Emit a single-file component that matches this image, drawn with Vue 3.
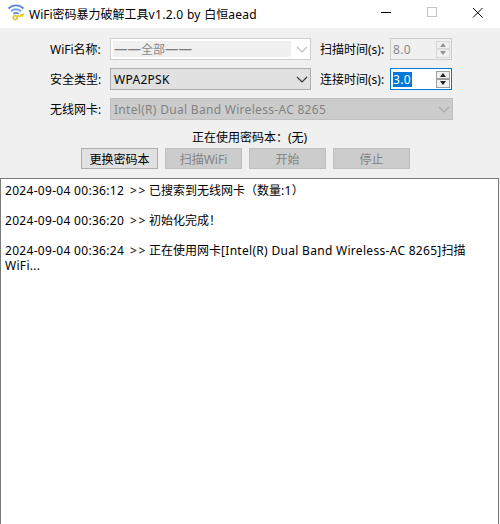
<script setup>
// each line: prefix is the timestamp column, parts are [text, isLatin]
const log = [
  { time: '2024-09-04 00:36:12', parts: [['已搜索到无线网卡（数量', false], [':1', true], ['）', false]] },
  null,
  { time: '2024-09-04 00:36:20', parts: [['初始化完成！', false]] },
  null,
  {
    time: '2024-09-04 00:36:24',
    parts: [
      ['正在使用网卡', false],
      ['[Intel(R) Dual Band Wireless-AC 8265]', true],
      ['扫描', false],
      ['WiFi...', true]
    ]
  }
]
</script>

<template>
  <div class="window">
    <div class="titlebar">
      <svg class="app-icon" width="20" height="20" viewBox="0 0 20 20">
        <path d="M1.5 4.5 A10.5 10.5 0 0 1 16.5 4.5" fill="none" stroke="#5b8ad6" stroke-width="1.9" />
        <path d="M4 7.3 A7 7 0 0 1 14 7.3" fill="none" stroke="#7ba4e6" stroke-width="1.9" />
        <path d="M6.3 10 A3.8 3.8 0 0 1 11.7 10" fill="none" stroke="#5b8ad6" stroke-width="1.7" />
        <circle cx="8.2" cy="13.6" r="2" fill="none" stroke="#e3c52c" stroke-width="1.6" />
        <path d="M10 12.6 L17 10 M15 10.8 L15.8 12.6 M13 11.5 L13.8 13.3" fill="none" stroke="#e3c52c" stroke-width="1.5" />
      </svg>
      <span class="title">WiFi密码暴力破解工具<span class="lat">v1.2.0 by </span>白恒<span class="lat">aead</span></span>
      <div class="win-buttons">
        <svg width="46" height="28" viewBox="0 0 46 28"><path d="M18 12.5 H28" stroke="#000" /></svg>
        <svg width="46" height="28" viewBox="0 0 46 28"><rect x="18.5" y="7.5" width="9" height="9" fill="none" stroke="#c4c4c4" /></svg>
        <svg width="46" height="28" viewBox="0 0 46 28"><path d="M18 8 L27.5 17.5 M27.5 8 L18 17.5" stroke="#000" /></svg>
      </div>
    </div>

    <div class="panel">
      <div class="row">
        <label class="lbl">WiFi名称:</label>
        <div class="combo combo-off short">
          <span class="combo-inner"><span class="dash">——</span>全部<span class="dash">——</span></span>
          <svg class="chev" width="12" height="8" viewBox="0 0 12 8"><path d="M1 1 L6 6 L11 1" fill="none" stroke="#bdbdbd" stroke-width="1.1" /></svg>
        </div>
        <label class="lbl2">扫描时间(s):</label>
        <div class="spin spin-off">
          <span class="spin-val lat">8.0</span>
          <div class="arrows">
            <span class="arrow"><i class="up"></i></span>
            <span class="arrow"><i class="down"></i></span>
          </div>
        </div>
      </div>

      <div class="row">
        <label class="lbl">安全类型:</label>
        <div class="combo short">
          <span class="lat">WPA2PSK</span>
          <svg class="chev" width="12" height="8" viewBox="0 0 12 8"><path d="M1 1 L6 6 L11 1" fill="none" stroke="#333" stroke-width="1.1" /></svg>
        </div>
        <label class="lbl2">连接时间(s):</label>
        <div class="spin spin-on">
          <span class="spin-val"><b class="sel lat">3.0</b></span>
          <div class="arrows">
            <span class="arrow"><i class="up"></i></span>
            <span class="arrow"><i class="down"></i></span>
          </div>
        </div>
      </div>

      <div class="row">
        <label class="lbl">无线网卡:</label>
        <div class="combo combo-dis wide">
          <span class="lat">Intel(R) Dual Band Wireless-AC 8265</span>
          <svg class="chev" width="12" height="8" viewBox="0 0 12 8"><path d="M1 1 L6 6 L11 1" fill="none" stroke="#a8a8a8" stroke-width="1.1" /></svg>
        </div>
      </div>

      <div class="status">正在使用密码本：(无)</div>

      <div class="buttons">
        <button class="btn">更换密码本</button>
        <button class="btn off">扫描WiFi</button>
        <button class="btn off">开始</button>
        <button class="btn off">停止</button>
      </div>
    </div>

    <div class="logbox">
      <div v-for="(line, i) in log" :key="i" class="line">
        <template v-if="line">
          <span class="prefix"><span class="lat">{{ line.time }}</span><span class="sep">&gt;&gt;</span></span>
          <span v-for="(p, j) in line.parts" :key="j" :class="{ lat: p[1] }">{{ p[0] }}</span>
        </template>
      </div>
    </div>
  </div>
</template>

<style scoped>
.window {
  width: 500px;
  height: 524px;
  display: flex;
  flex-direction: column;
  background: #f0f0f0;
  font-family: "Noto Sans", "Noto Sans CJK SC", sans-serif;
  font-size: 12px;
  color: #000;
  overflow: hidden;
}
.lat {
  letter-spacing: 0.3px;
}
.titlebar {
  height: 28px;
  background: #fff;
  display: flex;
  align-items: center;
  padding-left: 7px;
  flex-shrink: 0;
}
.app-icon {
  margin-right: 2px;
}
.win-buttons {
  margin-left: auto;
  display: flex;
  margin-right: -1px;
}
.panel {
  height: 150px;
  flex-shrink: 0;
  padding-top: 10px;
  box-sizing: border-box;
}
.row {
  display: flex;
  align-items: center;
  height: 22px;
  margin-bottom: 8px;
}
.lbl {
  width: 50px;
  margin-left: 50px;
  margin-right: 10px;
  white-space: nowrap;
}
.lbl2 {
  margin-left: 9px;
  width: 70px;
  white-space: nowrap;
}
.combo {
  height: 22px;
  box-sizing: border-box;
  border: 1px solid #adadad;
  background: #e1e1e1;
  display: flex;
  align-items: center;
  padding-left: 3px;
  position: relative;
}
.short {
  width: 201px;
}
.wide {
  width: 343px;
}
.combo-off {
  background: #fff;
  border-color: #cfcfcf;
  padding: 2px;
}
.combo-inner {
  flex: 1;
  align-self: stretch;
  margin-right: 17px;
  background: #f0f0f0;
  color: #8a8a8a;
  padding-left: 1px;
  line-height: 16px;
  white-space: nowrap;
}
.dash {
  font-size: 13.5px;
  color: #7c7c7c;
}
.combo-dis {
  background: #cccccc;
  border-color: #bfbfbf;
  color: #838383;
}
.chev {
  position: absolute;
  right: 2px;
  top: 7px;
}
.spin {
  width: 62px;
  height: 22px;
  box-sizing: border-box;
  display: flex;
  align-items: center;
  justify-content: space-between;
  padding: 0 1px 0 2px;
}
.spin-off {
  border: 1px solid #cccccc;
  color: #8a8a8a;
}
.spin-off .arrow {
  background: #f0f0f0;
  border-color: #d9d9d9;
}
.spin-off i {
  opacity: 0.45;
}
.spin-on {
  border: 1px solid #0078d7;
  background: #fff;
}
.spin-val {
  line-height: 15px;
}
.sel {
  font-weight: normal;
  background: #0078d7;
  color: #fff;
  display: inline-block;
  padding-right: 1px;
}
.arrows {
  display: flex;
  flex-direction: column;
}
.arrow {
  width: 14px;
  height: 8.5px;
  box-sizing: border-box;
  border: 1px solid #a0a0a0;
  background: #f0f0f0;
  display: flex;
  align-items: center;
  justify-content: center;
}
.up {
  border-left: 3.5px solid transparent;
  border-right: 3.5px solid transparent;
  border-bottom: 4px solid #222;
}
.down {
  border-left: 3.5px solid transparent;
  border-right: 3.5px solid transparent;
  border-top: 4px solid #222;
}
.status {
  text-align: center;
  height: 20px;
  line-height: 20px;
  padding-right: 1px;
}
.buttons {
  display: flex;
  gap: 7px;
  margin-left: 81px;
}
.btn {
  width: 77px;
  height: 21px;
  padding: 0;
  box-sizing: border-box;
  font: inherit;
  border: 1px solid #adadad;
  background: #e1e1e1;
  color: #000;
}
.btn.off {
  background: #cccccc;
  border-color: #bfbfbf;
  color: #838383;
}
.logbox {
  flex: 1;
  background: #fff;
  border: 1px solid #7a7a7a;
  border-bottom: none;
  margin-right: 1px;
  padding: 4px 3px 0 4px;
  line-height: 15px;
}
.line {
  min-height: 15px;
}
.prefix {
  display: inline-block;
  width: 144px;
  white-space: nowrap;
}
.sep {
  margin-left: 6px;
  letter-spacing: 1.5px;
}
</style>
